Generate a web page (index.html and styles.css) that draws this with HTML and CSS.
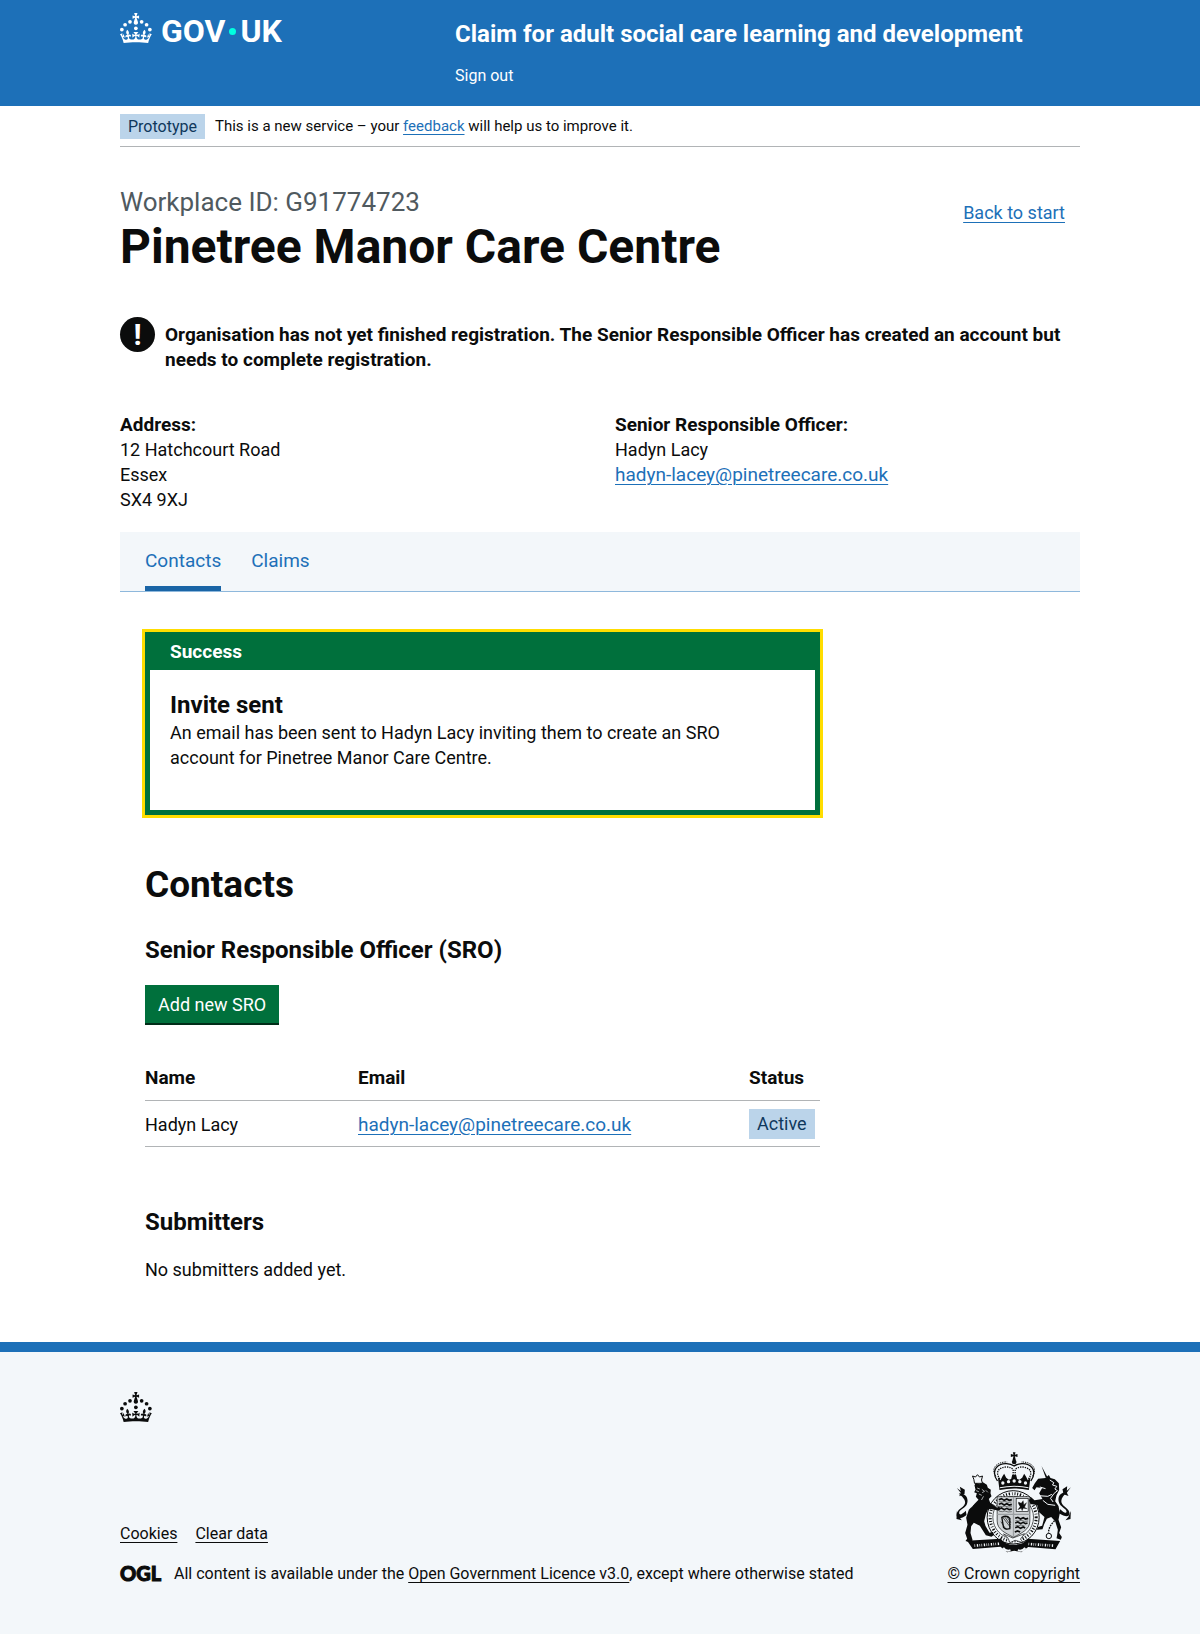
FILE: index.html
```html
<!DOCTYPE html>
<html lang="en">
<head>
<meta charset="utf-8">
<meta name="viewport" content="width=device-width, initial-scale=1">
<title>Pinetree Manor Care Centre</title>
<link rel="stylesheet" href="styles.css">
</head>
<body>
<svg class="sprite" aria-hidden="true">
  <symbol id="crown" viewBox="0 0 64 60">
    <circle cx="20" cy="17.6" r="3.7"/><circle cx="10.2" cy="23.5" r="3.7"/><circle cx="3.7" cy="33.2" r="3.7"/><circle cx="31.7" cy="30.6" r="3.7"/><circle cx="43.3" cy="17.6" r="3.7"/><circle cx="53.2" cy="23.5" r="3.7"/><circle cx="59.7" cy="33.2" r="3.7"/>
    <path d="M33.1,9.8c.2-.1.3-.3.5-.5l4.6,2.4v-6.8l-4.6,1.5c-.1-.2-.3-.3-.5-.5l1.9-5.9h-6.7l1.9,5.9c-.2.1-.3.3-.5.5l-4.6-1.5v6.8l4.6-2.4c.1.2.3.3.5.5l-2.6,8c-.9,2.8,1.2,5.7,4.1,5.7h0c3,0,5.1-2.9,4.1-5.7l-2.6-8ZM37,37.9s-3.4,3.8-4.1,6.1c2.2,0,4.2-.5,6.4-2.8l-.7,8.5c-2-2.8-4.4-4.1-5.7-3.8.1,3.1.5,6.7,5.8,7.2,3.7.3,6.7-1.5,7-3.8.4-2.6-2-4.3-3.7-1.6-1.4-4.5,2.4-6.1,4.9-3.2-1.9-4.5-1.8-7.7,2.4-10.9,3,4,2.6,7.3-1.2,11.1,2.4-1.3,6.2,0,4,4.6-1.2-2.8-3.7-2.2-4.2.2-.3,1.7.7,3.7,3,4.2,1.9.3,4.7-.9,7-5.9-1.3,0-2.4.7-3.9,1.7l2.4-8c.6,2.3,1.4,3.7,2.2,4.5.6-1.6.5-2.8,0-5.3l5,1.8c-2.6,3.6-5.2,8.7-7.3,17.5-7.4-1.1-15.7-1.7-24.5-1.7h0c-8.8,0-17.1.6-24.5,1.7-2.1-8.9-4.7-13.9-7.3-17.5l5-1.8c-.5,2.5-.6,3.7,0,5.3.8-.8,1.6-2.3,2.2-4.5l2.4,8c-1.5-1-2.6-1.7-3.9-1.7,2.3,5,5.2,6.2,7,5.9,2.3-.4,3.3-2.4,3-4.2-.5-2.4-3-3.1-4.2-.2-2.2-4.6,1.6-6,4-4.6-3.7-3.7-4.2-7.1-1.2-11.1,4.2,3.2,4.3,6.4,2.4,10.9,2.5-2.8,6.3-1.3,4.9,3.2-1.8-2.7-4.1-1-3.7,1.6.3,2.3,3.3,4.1,7,3.8,5.4-.5,5.7-4.2,5.8-7.2-1.3-.2-3.7,1-5.7,3.8l-.7-8.5c2.2,2.3,4.2,2.7,6.4,2.8-.7-2.3-4.1-6.1-4.1-6.1h10.6Z"/>
  </symbol>
</svg>

<header class="header">
  <div class="container header-inner">
    <a class="logo" href="#" aria-label="GOV.UK">
      <svg class="crown" aria-hidden="true"><use href="#crown"/></svg>
      <span class="logo-text">GOV</span><span class="logo-dot"></span><span class="logo-text">UK</span>
    </a>
    <div class="header-content">
      <a class="service-name" href="#">Claim for adult social care learning and development</a>
      <nav><a class="header-link" href="#">Sign out</a></nav>
    </div>
  </div>
</header>

<div class="container">
  <div class="phase-banner">
    <strong class="tag tag-small">Prototype</strong>
    <span>This is a new service – your <a class="link" href="#">feedback</a> will help us to improve it.</span>
  </div>

  <main>
    <div class="title-row">
      <h1 class="title"><span class="caption">Workplace ID: G91774723</span>Pinetree Manor Care Centre</h1>
      <a class="link back-link" href="#">Back to start</a>
    </div>

    <div class="warning">
      <span class="warning-icon" aria-hidden="true">!</span>
      <strong class="warning-text">Organisation has not yet finished registration. The Senior Responsible Officer has created an account but needs to complete registration.</strong>
    </div>

    <div class="details">
      <div>
        <strong class="label">Address:</strong>12 Hatchcourt Road<br>Essex<br>SX4 9XJ
      </div>
      <div>
        <strong class="label">Senior Responsible Officer:</strong>Hadyn Lacy<br><a class="link email" href="#">hadyn-lacey@pinetreecare.co.uk</a>
      </div>
    </div>

    <nav class="tabs">
      <a class="tab tab-current" href="#" aria-current="page">Contacts</a>
      <a class="tab" href="#">Claims</a>
    </nav>

    <div class="panel">
      <section class="notification" role="alert">
        <h2 class="notification-title">Success</h2>
        <div class="notification-body">
          <h3 class="heading-m">Invite sent</h3>
          <p>An email has been sent to Hadyn Lacy inviting them to create an SRO account for Pinetree Manor Care Centre.</p>
        </div>
      </section>

      <h2 class="heading-l">Contacts</h2>
      <h3 class="heading-m">Senior Responsible Officer (SRO)</h3>
      <button class="button" type="button">Add new SRO</button>

      <table class="table">
        <thead>
          <tr><th class="col-name" scope="col">Name</th><th scope="col">Email</th><th class="col-status" scope="col">Status</th></tr>
        </thead>
        <tbody>
          <tr>
            <td>Hadyn Lacy</td>
            <td><a class="link email" href="#">hadyn-lacey@pinetreecare.co.uk</a></td>
            <td><strong class="tag">Active</strong></td>
          </tr>
        </tbody>
      </table>

      <h3 class="heading-m">Submitters</h3>
      <p class="empty">No submitters added yet.</p>
    </div>
  </main>
</div>

<footer class="footer">
  <div class="container">
    <svg class="crown" aria-hidden="true"><use href="#crown"/></svg>
    <div class="footer-row">
      <div>
        <ul class="footer-links">
          <li><a href="#">Cookies</a></li>
          <li><a href="#">Clear data</a></li>
        </ul>
        <div class="licence">
          <span class="ogl">OGL</span>
          <span>All content is available under the <a href="#">Open Government Licence v3.0</a>, except where otherwise stated</span>
        </div>
      </div>
      <a class="copyright" href="#">
        <svg class="arms" viewBox="50 35 350 306" aria-hidden="true">
          <!-- crown -->
          <path d="M223 36h8l-2 7 8-2v9l-8-2 3 12h-10l3-12-8 2v-9l8 2z"/>
          <circle cx="227" cy="65" r="7"/>
          <g fill="none" stroke="currentColor">
            <path d="M177 122C154 88 180 69 204 70Q218 71 227 77Q236 71 250 70C274 69 300 88 277 122" stroke-width="4"/>
            <path d="M184 116C167 92 185 80 204 80Q218 80 224 88V108M270 116C287 92 269 80 250 80Q236 80 230 88V108" stroke-width="4" stroke-dasharray="4 3"/>
            <path d="M172 108C154 80 180 64 206 65M282 108C300 80 274 64 248 65" stroke-width="3" stroke-dasharray="4 3"/>
          </g>
          <path d="M178 110l8 10 6-12 5-8 6 12 8 6 7-2 3-12h12l3 12 7 2 8-6 6-12 5 8 6 12 8-10-5 39q-44-9-88 0z"/>
          <g fill="#f3f7fa"><circle cx="193" cy="128" r="5"/><circle cx="210" cy="124" r="5"/><circle cx="227" cy="122" r="5"/><circle cx="244" cy="124" r="5"/><circle cx="261" cy="128" r="5"/><path d="M184 141q43-9 86 0v3q-43-9-86 0z"/></g>
          <!-- garter -->
          <ellipse cx="224" cy="231" rx="78" ry="80" fill="#f3f7fa" stroke="currentColor" stroke-width="3"/>
          <ellipse cx="224" cy="231" rx="69" ry="71" fill="none" stroke="currentColor" stroke-width="9" stroke-dasharray="3 5 4 6 2 6 3 5"/>
          <ellipse cx="224" cy="231" rx="61" ry="63" fill="none" stroke="currentColor" stroke-width="2"/>
          <!-- quartered shield -->
          <path d="M176 169h98v73c0 26-25 36-49 49-24-13-49-23-49-49z" fill="#cfd3d6" stroke="currentColor" stroke-width="2"/>
          <path d="M225 169v121M176 222h98" fill="none" stroke="#9a9ea1" stroke-width="4"/>
          <g fill="none" stroke="currentColor">
            <path d="M181 178l8-3 8 5 8-4 7 4 8-2M181 192l8-3 8 5 8-4 7 4 8-2M181 206l8-3 8 5 8-4 7 4 8-2M230 234l8-3 8 5 8-4 7 4 8-2M230 248l8-3 8 5 8-4 7 4 6-2M230 262l8-3 8 5 8-4 6 3M229 275l8-3 8 3" stroke-width="5"/>
            <path d="M181 184l10 1 7-2 10 3 11-1M182 198l10 1 7-2 10 3 11-1M182 213l10 1 7-2 10 3 11-1M231 241l10 1 7-2 10 3 11-1M231 255l10 1 7-2 10 3" stroke-width="1.5"/>
            <rect x="233" y="175" width="36" height="39" fill="#f3f7fa" stroke-width="2"/>
            <path d="M240 185l8 4 6-8 2 12 8-6-6 14 8 4-12-1-3 7-3-7-10 4 7-9-5-9z" fill="currentColor" stroke-width="1"/>
            <path d="M192 230l24 31M198 229l18 25M205 229l12 18M187 244l17 25" stroke-width="2"/>
            <path d="M190 231q15-8 24 3v31q-14 4-19-4z" stroke-width="4"/>
          </g>
          <!-- lion -->
          <path d="M108 135l4-8 10 5 10-7 13 8 3 9 9 6-1 11 3 9-8 8 4 11 22 16 4-7 5 9-4 6-21-4-12-1-7 16-5 21 4 14 12 20 10-2 4 8-8 6-17-4-18-29-18-9-8 11-2 20 6 20-2 9-12-3-7-2 5-7-6-17 7-25-4-21 8-24 29-30-8-9 3-10-8-3 4-8z"/>
          <path d="M106 117l-4-10 9 3 6-7 6 7 9-3-3 12 3 10h-24z" fill="#f3f7fa" stroke="currentColor" stroke-width="3"/>
          <path d="M84 224c-32 25-39-5-17-20 24-16 10-31-6-44 18-2 30 12 25 29-3 15-25 18-24 29 1 9 11 2 20-7z"/>
          <path d="M55 143l12 9-3-13 15 9-1 13-16 7 5-10zM55 213l7 17 8 10-16-4z"/>
          <path d="M116 143l8 3M130 147l8 6-7 4M113 151l8 3M105 191l-7 10M135 168l-6 11M121 161l9 4M142 150l6 6" stroke="#f3f7fa" stroke-width="2" fill="none"/>
          <!-- unicorn -->
          <path d="M309 77l18 34-5 2z"/>
          <path d="M321 113l10-9 5 9 13 4 12 12 1 20-8 16-4 18 10 14 4 21-4 20 8 23-6 17 8 12-3 8-13-4 2-10 2-16-8-25-12-13-13 5-8 17-5 15-17 1 3-8 13-4 7-26-16-14-6-22-20-3-5-11 7-9 10 9 24-4-10-17 9-16-17-2-6 9-7-7 8-14 10-14z"/>
          <path d="M334 119l12 8-4 7 13 4-6 8 8 5-10 8-11 15 8 11M304 140l17 5M300 166l28 2 12-6M313 180l15 12 22 3" stroke="#f3f7fa" stroke-width="3" fill="none"/>
          <path d="M361 219c36 22 41-3 19-19-21-15-10-31 6-44-18-2-30 12-25 29 4 15 22 19 23 28 0 9-10 3-19-6z"/>
          <path d="M397 141l-12 10 1-13-14 9 3 15 15 5-5-10zM397 212l-7 17-9 11 15-4z"/>
          <path d="M358 211q-1 22-14 35t-14 31" fill="none" stroke="currentColor" stroke-width="4" stroke-dasharray="5 3"/>
          <circle cx="331" cy="287" r="8" fill="none" stroke="currentColor" stroke-width="3"/>
          <!-- motto ribbon -->
          <path d="M86 301l101-6q11 18 40 18t40-18l98 7-14 25-82-7-21 16-21-5-21 5-20-17-83 7z"/>
          <path d="M108 316l76-6M270 311l76 5" fill="none" stroke="#f3f7fa" stroke-width="8" stroke-dasharray="2 5 4 4 2 4"/>
          <path d="M194 322q7 12 22 8M260 322q-7 12-22 8" fill="none" stroke="#f3f7fa" stroke-width="6"/>
          <path d="M195 281l28 12 35-13-12 16 8 11-24-7-16 7-5-13z" fill="#f3f7fa" stroke="currentColor" stroke-width="2"/>
        </svg>
        <span>© Crown copyright</span>
      </a>
    </div>
  </div>
</footer>
</body>
</html>
```
FILE: styles.css
```css
*, *::before, *::after { box-sizing: border-box; }

html { background: #f3f7fa; }

body {
  margin: 0;
  background: #fff;
  color: #0b0c0c;
  font: 18px/25px Roboto, "Liberation Sans", Arial, sans-serif;
}

h1, h2, h3, p, ul { margin: 0; padding: 0; }

.sprite { display: none; }

.container { max-width: 960px; margin: 0 auto; }

.link {
  color: #1d70b8;
  text-decoration: underline;
  text-decoration-thickness: 1px;
  text-underline-offset: 3px;
}

.email { font-size: 19px; }

.crown { display: block; width: 32px; height: 30px; fill: currentColor; }

/* Header */
.header { background: #1d70b8; color: #fff; }
.header a { color: #fff; text-decoration: none; }
.header-inner { display: flex; padding: 13px 0 18px; }
.logo { display: flex; align-items: center; align-self: flex-start; width: 335px; }
.logo-text { padding-top: 6px; font-size: 32px; line-height: 24px; font-weight: 700; }
.crown + .logo-text { margin-left: 9px; }
.logo-dot { width: 7px; height: 7px; margin: 6px 4px 0; border-radius: 50%; background: #00ffe0; }
.header-content { flex: 1; padding-top: 6px; }
.service-name { display: block; font-size: 24px; line-height: 30px; font-weight: 700; }
.header-link { display: block; margin-top: 14px; font-size: 16px; line-height: 25px; }

/* Phase banner */
.phase-banner {
  display: flex;
  align-items: center;
  gap: 10px;
  padding: 8px 0 7px;
  border-bottom: 1px solid #b1b4b6;
  font-size: 15px;
}

.tag { display: inline-block; padding: 2px 8px 3px; background: #bbd4ea; color: #0f385c; font-weight: 400; }
.tag-small { padding: 0 8px; font-size: 16px; }

/* Title */
.title-row { display: flex; justify-content: space-between; align-items: flex-start; padding: 40px 15px 0 0; }
.title { font-size: 48px; line-height: 50px; font-weight: 700; }
.caption { display: block; padding-bottom: 5px; color: #505a5f; font-size: 26px; line-height: 30px; font-weight: 400; }
.back-link { margin-top: 13px; }

.warning { display: flex; gap: 10px; padding: 45px 0 40px; }
.warning-icon {
  flex: none;
  width: 35px;
  height: 35px;
  border-radius: 50%;
  background: #0b0c0c;
  color: #fff;
  font-size: 30px;
  line-height: 35px;
  font-weight: 700;
  text-align: center;
}
.warning-text { padding-top: 5px; font-size: 19px; }

.details { display: grid; grid-template-columns: 1fr 1fr; gap: 30px; padding-bottom: 20px; }
.label { display: block; font-size: 19px; }

/* Tabs */
.tabs { display: flex; gap: 30px; padding: 0 25px; background: #f3f7fa; border-bottom: 1px solid #8eb8dc; font-size: 19px; }
.tab { padding: 16px 0 13px; border-bottom: 5px solid transparent; color: #1d70b8; text-decoration: none; }
.tab-current { border-color: #1a65a6; }

/* Tab content */
.panel { max-width: 700px; padding: 40px 0 60px 25px; }

.notification { margin-bottom: 50px; border: 5px solid #00703c; outline: 3px solid #fd0; }
.notification-title { padding: 2px 20px 6px; background: #00703c; color: #fff; font-size: 19px; line-height: 25px; }
.notification-body { padding: 20px 20px 40px; }
.notification-body p { max-width: 605px; }

.heading-l { margin-bottom: 30px; font-size: 37px; line-height: 40px; }
.heading-m { font-size: 24px; line-height: 30px; }

.button {
  display: block;
  margin: 20px 0 32px;
  padding: 7px 13px 6px;
  border: 0;
  background: #00703c;
  box-shadow: 0 2px 0 #002d18;
  color: #fff;
  font: inherit;
}

.table { width: 100%; margin-bottom: 60px; border-collapse: collapse; table-layout: fixed; text-align: left; }
.table th { padding: 10px 0; border-bottom: 1px solid #b1b4b6; font-size: 19px; }
.table td { padding: 8px 0 7px; border-bottom: 1px solid #b1b4b6; }
.col-name { width: 213px; }
.col-status { width: 71px; }

.empty { margin-top: 20px; }

/* Footer */
.footer { padding: 40px 0 48px; background: #f3f7fa; border-top: 10px solid #1d70b8; font-size: 16px; }
.footer a { color: #0b0c0c; text-decoration: underline; text-decoration-thickness: 1px; text-underline-offset: 3px; }
.footer-row { display: flex; justify-content: space-between; align-items: flex-end; padding-top: 30px; }
.footer-links { display: flex; gap: 18px; margin-bottom: 15px; list-style: none; }
.licence { display: flex; align-items: center; gap: 13px; }
.ogl { width: 41px; font-family: Lato, sans-serif; font-size: 20px; line-height: 25px; font-weight: 900; -webkit-text-stroke: 1px currentColor; }
.copyright { display: flex; flex-direction: column; align-items: center; gap: 7px; }
.arms { display: block; width: 117px; height: 102px; fill: currentColor; }
```
